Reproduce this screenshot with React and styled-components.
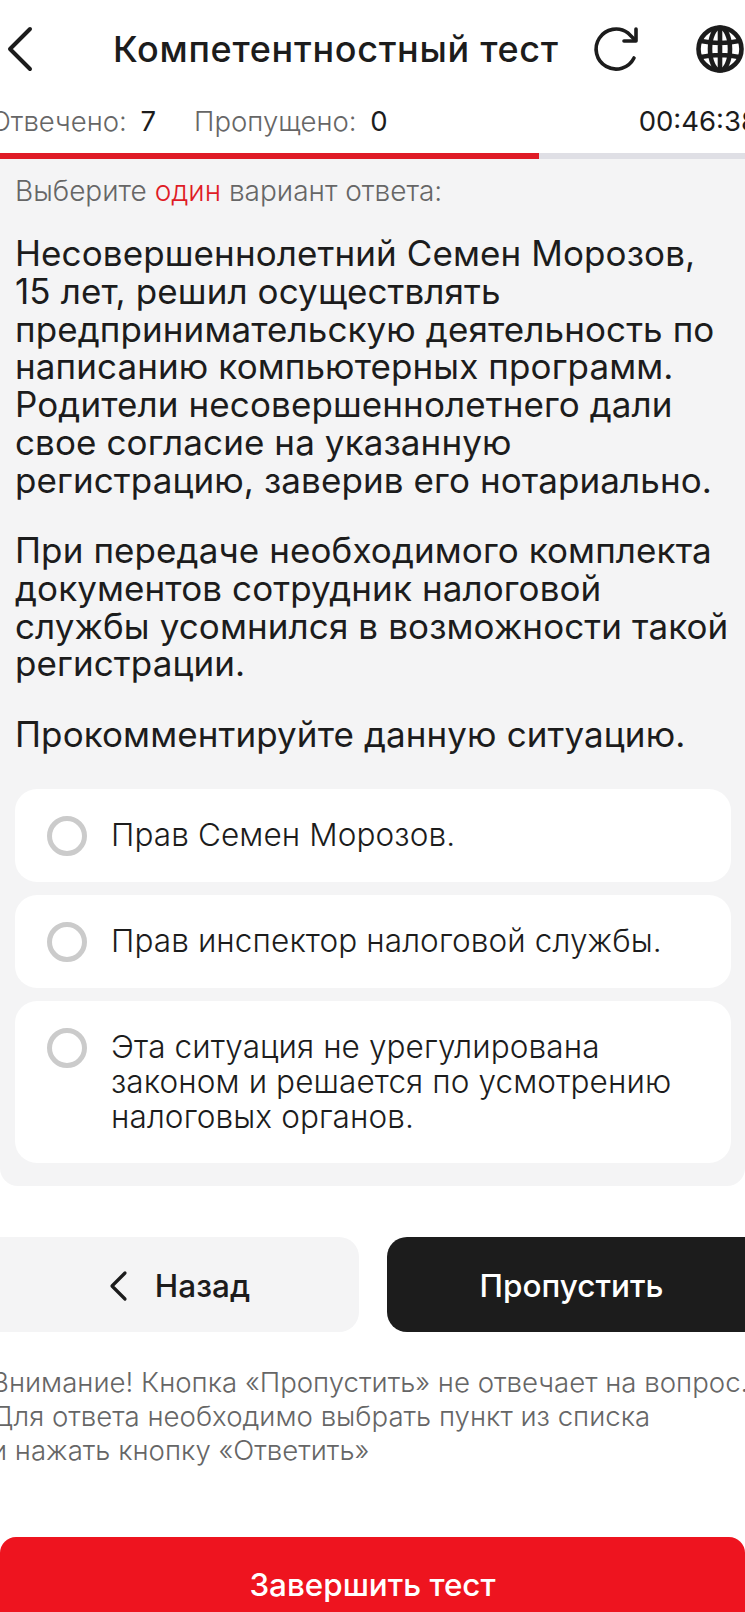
import React from 'react';
import styled, { createGlobalStyle } from 'styled-components';

const GlobalStyle = createGlobalStyle`
    html, body {
        margin: 0;
        padding: 0;
        background: #fff;
    }
    * {
        box-sizing: border-box;
    }
`;

const options = [
    'Прав Семен Морозов.',
    'Прав инспектор налоговой службы.',
    'Эта ситуация не урегулирована законом и решается по усмотрению налоговых органов.',
];

const App = () => {
    return (
        <Page>
            <GlobalStyle />
            <Header>
                <IconSlot>
                    <svg width="30" height="46" viewBox="0 0 30 46" fill="none" stroke="#1c1c1c" strokeWidth="4" strokeLinecap="round" strokeLinejoin="round">
                        <path d="M24 3 L4 23 L24 43" />
                    </svg>
                </IconSlot>
                <Title>Компетентностный тест</Title>
                <IconSlot>
                    <svg width="50" height="50" viewBox="0 0 50 50" fill="none" stroke="#1c1c1c" strokeWidth="3.6" strokeLinecap="round" strokeLinejoin="round">
                        <path d="M43 34 A20 20 0 1 1 37 9 L44 16" />
                        <path d="M45 5 V17 H33" />
                    </svg>
                </IconSlot>
                <GlobeSlot>
                    <svg width="50" height="50" viewBox="0 0 50 50" fill="none" stroke="#1c1c1c" strokeWidth="4.6">
                        <circle cx="25" cy="25" r="21.5" />
                        <ellipse cx="25" cy="25" rx="10" ry="21.5" />
                        <path d="M6 17 Q25 21 44 17 M6 33 Q25 29 44 33 M25 4 V46" />
                    </svg>
                </GlobeSlot>
            </Header>
            <Stats>
                <Stat>Отвечено: <b>7</b></Stat>
                <Stat>Пропущено: <b>0</b></Stat>
                <Timer>00:46:38</Timer>
            </Stats>
            <Progress>
                <ProgressFill style={{ width: `${(539 / 745) * 100}%` }} />
            </Progress>
            <Panel>
                <Hint>Выберите <em>один</em> вариант ответа:</Hint>
                <Question>
                    Несовершеннолетний Семен Морозов, 15 лет, решил осуществлять предпринимательскую деятельность по написанию компьютерных программ. Родители несовершеннолетнего дали свое согласие на указанную регистрацию, заверив его нотариально.
                </Question>
                <Question>
                    При передаче необходимого комплекта документов сотрудник налоговой службы усомнился в возможности такой регистрации.
                </Question>
                <Question>Прокомментируйте данную ситуацию.</Question>
                <Options>
                    {options.map((text) => (
                        <Option key={text}>
                            <Radio />
                            <OptionText>{text}</OptionText>
                        </Option>
                    ))}
                </Options>
            </Panel>
            <Buttons>
                <BackButton>
                    <svg width="20" height="32" viewBox="0 0 20 32" fill="none" stroke="#1c1c1c" strokeWidth="3.2" strokeLinecap="round" strokeLinejoin="round">
                        <path d="M16 3 L3 16 L16 29" />
                    </svg>
                    Назад
                </BackButton>
                <SkipButton>Пропустить</SkipButton>
            </Buttons>
            <Notice>
                Внимание! Кнопка «Пропустить» не отвечает на вопрос.<br />
                Для ответа необходимо выбрать пункт из списка<br />
                и нажать кнопку «Ответить»
            </Notice>
            <FinishButton>Завершить тест</FinishButton>
        </Page>
    );
};

export default App;

const Page = styled.div`
    width: 745px;
    height: 1612px;
    overflow: hidden;
    font-family: Inter, "Noto Sans", sans-serif;
    color: #1c1c1c;
    background: #fff;
`;
const Header = styled.div`
    height: 98px;
    padding: 0 0 0 6px;
    display: flex;
    align-items: center;
`;
const IconSlot = styled.div`
    display: flex;
    flex: none;
    align-items: center;
`;
const GlobeSlot = styled(IconSlot)`
    margin-left: 54px;
`;
const Title = styled.div`
    margin: 0 34px 0 77px;
    width: 444px;
    flex: none;
    font-size: 36px;
    font-weight: 500;
    letter-spacing: 0.7px;
    white-space: nowrap;
`;
const Stats = styled.div`
    width: 770px;
    height: 55px;
    padding-bottom: 9px;
    margin-left: -10px;
    display: flex;
    align-items: center;
    gap: 38px;
    font-size: 27.5px;
    font-weight: 300;
    color: #666;
    white-space: nowrap;
    b {
        margin-left: 6px;
        font-weight: 400;
        color: #1c1c1c;
    }
`;
const Stat = styled.div``;
const Timer = styled.div`
    margin-left: 213px;
    font-weight: 400;
    color: #1c1c1c;
`;
const Progress = styled.div`
    height: 6px;
    background: #dfdfe5;
`;
const ProgressFill = styled.div`
    height: 100%;
    background: #df1b26;
`;
const Panel = styled.div`
    padding: 12px 14px 23px 15px;
    background: #f4f4f5;
    border-radius: 0 0 18px 18px;
`;
const Hint = styled.div`
    height: 64px;
    font-size: 28px;
    font-weight: 300;
    line-height: 40px;
    color: #666;
    em {
        font-style: normal;
        color: #df1b26;
    }
`;
const Question = styled.p`
    margin: 0 -8px 32.5px 0;
    font-size: 35px;
    font-weight: 400;
    line-height: 37.8px;
    letter-spacing: 0.1px;
    &:last-of-type {
        margin-bottom: 35px;
    }
`;
const Options = styled.div`
    display: flex;
    flex-direction: column;
    gap: 13px;
`;
const Option = styled.div`
    padding: 27px 32px 26px;
    display: flex;
    gap: 24px;
    align-items: flex-start;
    background: #fff;
    border-radius: 22px;
    &:last-child {
        padding-bottom: 29px;
    }
`;
const Radio = styled.div`
    width: 40px;
    height: 40px;
    flex: none;
    border: 5px solid #cbcbcb;
    border-radius: 50%;
`;
const OptionText = styled.div`
    padding-top: 1px;
    font-size: 31.5px;
    font-weight: 300;
    line-height: 35px;
    letter-spacing: 0.1px;
`;
const Buttons = styled.div`
    margin: 51px 0 0 -20px;
    width: 790px;
    display: grid;
    grid-template-columns: 379px 379px;
    gap: 28px;
`;
const Button = styled.div`
    height: 95px;
    padding-top: 3px;
    display: flex;
    align-items: center;
    justify-content: center;
    border-radius: 20px;
    font-size: 31.5px;
    font-weight: 500;
`;
const BackButton = styled(Button)`
    padding-left: 20px;
    gap: 26px;
    background: #f4f4f5;
`;
const SkipButton = styled(Button)`
    padding-right: 10px;
    background: #1c1c1c;
    color: #fff;
`;
const Notice = styled.div`
    width: 760px;
    margin: 33px 0 0 -9px;
    height: 172px;
    font-size: 27.6px;
    font-weight: 300;
    line-height: 34px;
    color: #666;
    white-space: nowrap;
`;
const FinishButton = styled.div`
    height: 110px;
    padding-bottom: 13px;
    display: flex;
    align-items: center;
    justify-content: center;
    background: #ee141f;
    border-radius: 16px 16px 0 0;
    color: #fff;
    font-size: 31.4px;
    font-weight: 500;
`;
